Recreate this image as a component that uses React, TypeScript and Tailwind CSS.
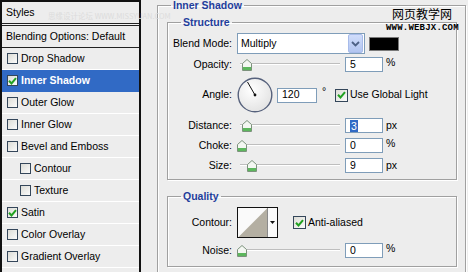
import React from "react";

type Effect = { label: string; checked?: boolean; selected?: boolean; indent?: boolean };

const effects: Effect[] = [
  { label: "Drop Shadow" },
  { label: "Inner Shadow", checked: true, selected: true },
  { label: "Outer Glow" },
  { label: "Inner Glow" },
  { label: "Bevel and Emboss" },
  { label: "Contour", indent: true },
  { label: "Texture", indent: true },
  { label: "Satin", checked: true },
  { label: "Color Overlay" },
  { label: "Gradient Overlay" },
];

function CheckMark() {
  return (
    <svg width="9" height="8" viewBox="0 0 9 8">
      <path d="M1 3.8 L3.5 6.5 L8 1.2" fill="none" stroke="#21A121" strokeWidth="2" />
    </svg>
  );
}

function Box({ checked, big }: { checked?: boolean; big?: boolean }) {
  const size = big ? "h-[13px] w-[13px]" : "h-[11px] w-[11px]";
  return (
    <span
      className={`${size} flex shrink-0 items-center justify-center border border-[#34465A] bg-gradient-to-br from-[#DCDCD6] to-[#FBFBFB]`}
    >
      {checked && <CheckMark />}
    </span>
  );
}

function Slider({ pos }: { pos: number }) {
  return (
    <div className="relative h-[15px] w-[108px] shrink-0">
      <div className="absolute left-[3px] top-[6px] h-[2px] w-[100px] border-y border-t-[#BEBEBE] border-b-white" />
      {/* thumb */}
      <svg className="absolute top-[2px]" style={{ left: pos }} width="10" height="12" viewBox="0 0 10 12">
        <path d="M0.5 4.5 L5 0.5 L9.5 4.5 L9.5 11.5 L0.5 11.5 Z" fill="#F4F7F2" stroke="#7C927C" />
        <rect x="1" y="8" width="8" height="3" fill="#5DB75D" />
      </svg>
    </div>
  );
}

function NumBox({ children, wide }: { children: React.ReactNode; wide?: boolean }) {
  return (
    <div
      className={`${wide ? "w-[40px]" : "w-[38px]"} flex h-[15px] shrink-0 items-center border border-[#7F9DB9] bg-white pl-[4px]`}
    >
      {children}
    </div>
  );
}

function Row({ label, className, children }: { label: string; className: string; children: React.ReactNode }) {
  return (
    <div className={`flex items-center ${className}`}>
      <span className="w-[64px] shrink-0 text-right">{label}</span>
      <div className="ml-[5px] flex items-center">{children}</div>
    </div>
  );
}

function Dial() {
  return (
    <svg width="36" height="36" viewBox="0 0 36 36" className="shrink-0">
      <defs>
        <radialGradient id="dialfill" cx="40%" cy="35%" r="70%">
          <stop offset="0%" stopColor="#FFFFFF" />
          <stop offset="100%" stopColor="#E2E2E2" />
        </radialGradient>
      </defs>
      <circle cx="18" cy="18" r="16.8" fill="url(#dialfill)" stroke="#56617C" strokeWidth="1.4" />
      <line x1="18" y1="18" x2="10.5" y2="5" stroke="#111" strokeWidth="1" />
      <circle cx="18" cy="18" r="1.4" fill="#111" />
    </svg>
  );
}

function ContourPreview() {
  return (
    <svg width="41" height="31" viewBox="0 0 41 31" className="shrink-0">
      <rect x="0.5" y="0.5" width="40" height="30" fill="#FAFAFA" stroke="#111" />
      <polygon points="1.5,30 30,1.5 30,30" fill="#B4AFA2" />
      <line x1="30.5" y1="1" x2="30.5" y2="30" stroke="#8A8A8A" />
      <polygon points="33,14 38,14 35.5,17" fill="#111" />
    </svg>
  );
}

export default function App() {
  return (
    <div className="relative flex h-[272px] w-[468px] overflow-hidden bg-[#EDEDED] font-['Liberation_Sans',Arial,sans-serif] text-[10.5px] text-black">
      {/* styles list */}
      <div className="w-[141px] shrink-0 border-x-2 border-t-2 border-[#111]">
        <div className="flex h-[21px] items-center pl-[4px]">Styles</div>
        <div className="h-[3px] border-y border-[#222] bg-[#F4F4F4]" />
        <div className="flex h-[22px] items-center border-b border-[#222] pl-[4px]">Blending Options: Default</div>
        {effects.map((e) => (
          <div
            key={e.label}
            className={`flex h-[22px] items-center border-b ${
              e.selected ? "border-[#316AC5] bg-[#316AC5] font-bold text-white" : "border-white"
            } ${e.indent ? "pl-[18px]" : "pl-[5px]"}`}
          >
            <Box checked={e.checked} />
            <span className="ml-[3px]">{e.label}</span>
          </div>
        ))}
      </div>

      {/* settings */}
      <div className="w-[327px] pl-[16px] pr-[2px]">
        <fieldset className="h-[300px] border border-[#A0A0A0] shadow-[inset_1px_1px_0_#fff,1px_1px_0_#fff]">
          <legend className="ml-[13px] px-[2px] text-[10.5px] font-bold leading-[10px] text-[#1F3E9C]">Inner Shadow</legend>
          <div className="pl-[9px] pr-[8px]">
            <fieldset className="mt-[7px] border border-[#A0A0A0] pb-[6px] shadow-[inset_1px_1px_0_#fff,1px_1px_0_#fff]">
              <legend className="ml-[13px] px-[2px] font-bold leading-[10px] text-[#1F3E9C]">Structure</legend>
              <Row label="Blend Mode:" className="mt-[6px] h-[21px]">
                <div className="flex h-[21px] w-[128px] items-center justify-between border border-[#7F9DB9] bg-white pl-[3px] pr-[1px]">
                  <span>Multiply</span>
                  <span className="flex h-[19px] w-[15px] items-center justify-center rounded-[2px] border border-[#A7BBEA] bg-gradient-to-b from-[#D0DDFB] to-[#B2C5F0]">
                    <svg width="9" height="6" viewBox="0 0 9 6">
                      <path d="M1 1 L4.5 4.5 L8 1" fill="none" stroke="#4D6185" strokeWidth="1.8" />
                    </svg>
                  </span>
                </div>
                <div className="ml-[4px] h-[14px] w-[30px] border border-[#7A7A7A] bg-black" />
              </Row>
              <Row label="Opacity:" className="mt-[3px] h-[15px]">
                <Slider pos={5} />
                <NumBox>5</NumBox>
                <span className="ml-[3px] self-start leading-[11px]">%</span>
              </Row>
              <Row label="Angle:" className="mt-[5px] h-[36px]">
                <Dial />
                <div className="ml-[4px]">
                  <NumBox wide>120</NumBox>
                </div>
                <span className="w-[18px] self-start pl-[5px] pt-[9px] leading-[10px]">°</span>
                <Box checked big />
                <span className="ml-[2px]">Use Global Light</span>
              </Row>
              <Row label="Distance:" className="mt-[5px] h-[15px]">
                <Slider pos={5} />
                <NumBox>
                  <span className="bg-[#316AC5] px-[1px] leading-[12px] text-white">3</span>
                </NumBox>
                <span className="ml-[3px]">px</span>
              </Row>
              <Row label="Choke:" className="mt-[5px] h-[15px]">
                <Slider pos={0} />
                <NumBox>0</NumBox>
                <span className="ml-[3px] self-start leading-[11px]">%</span>
              </Row>
              <Row label="Size:" className="mt-[5px] h-[15px]">
                <Slider pos={10} />
                <NumBox>9</NumBox>
                <span className="ml-[3px]">px</span>
              </Row>
            </fieldset>

            <fieldset className="mt-[11px] border border-[#A0A0A0] pb-[8px] shadow-[inset_1px_1px_0_#fff,1px_1px_0_#fff]">
              <legend className="ml-[13px] px-[2px] font-bold leading-[10px] text-[#1F3E9C]">Quality</legend>
              <Row label="Contour:" className="mt-[6px] h-[31px]">
                <ContourPreview />
                <div className="ml-[15px]">
                  <Box checked big />
                </div>
                <span className="ml-[2px]">Anti-aliased</span>
              </Row>
              <Row label="Noise:" className="mt-[5px] h-[15px]">
                <Slider pos={0} />
                <NumBox>0</NumBox>
                <span className="ml-[3px] self-start leading-[11px]">%</span>
              </Row>
            </fieldset>
          </div>
        </fieldset>
      </div>

      {/* watermarks */}
      <div className="absolute left-[48px] top-[11px] whitespace-nowrap text-[7.5px] leading-[9px] text-[#DCDCDC] font-['Noto_Sans_CJK_SC',sans-serif]">
        思缘设计论坛 WWW.MISSYUAN.COM
      </div>
      <div className="absolute left-[392px] top-[7px] text-[12px] leading-[14px] font-['Noto_Sans_CJK_SC',sans-serif]">
        网页教学网
      </div>
      <div className="absolute left-[386px] top-[23px] font-['Liberation_Mono',monospace] text-[9px] font-bold leading-[10px] tracking-[0.2px]">
        WWW.WEBJX.COM
      </div>
    </div>
  );
}
